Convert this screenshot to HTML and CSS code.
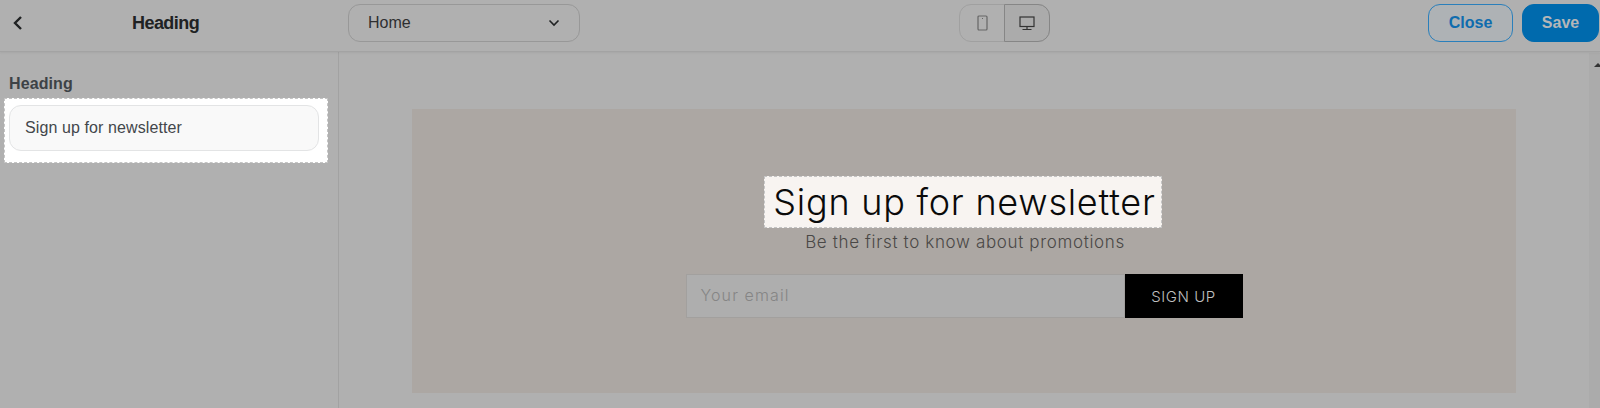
FILE: index.html
```html
<!DOCTYPE html>
<html lang="en">
<head>
<meta charset="utf-8">
<title>Heading editor</title>
<link rel="stylesheet" href="styles.css">
</head>
<body>
<header class="topbar">
  <div class="title-area">
    <button class="back" aria-label="Back">
      <svg width="12" height="16" viewBox="0 0 12 16"><path d="M9 2 L3 8 L9 14" fill="none" stroke="#202223" stroke-width="2.4"/></svg>
    </button>
    <h1 class="title">Heading</h1>
  </div>
  <div class="page-select">
    <span>Home</span>
    <svg width="12" height="8" viewBox="0 0 12 8"><path d="M1.5 1.5 L6 6 L10.5 1.5" fill="none" stroke="#202223" stroke-width="1.6"/></svg>
  </div>
  <div class="devices">
    <div class="device">
      <svg width="11" height="16" viewBox="0 0 11 16"><rect x="1" y="1" width="9" height="14" rx="1" fill="none" stroke="#666" stroke-width="1.2"/><rect x="5" y="3" width="1" height="1" fill="#666"/></svg>
    </div>
    <div class="device device-active">
      <svg width="16" height="15" viewBox="0 0 16 15"><rect x="1" y="1" width="14" height="9.5" fill="none" stroke="#333" stroke-width="1.2"/><path d="M8 11 V13 M3.5 13.5 H12.5" stroke="#333" stroke-width="1.2" fill="none"/></svg>
    </div>
  </div>
  <div class="actions">
    <button class="btn btn-close">Close</button>
    <button class="btn btn-save">Save</button>
  </div>
</header>
<div class="workspace">
  <aside class="sidebar">
    <h2 class="side-label">Heading</h2>
    <div class="field-focus">
      <div class="field">Sign up for newsletter</div>
    </div>
  </aside>
  <main class="canvas">
    <section class="card">
      <div class="heading-focus">Sign up for newsletter</div>
      <p class="sub">Be the first to know about promotions</p>
      <form class="signup">
        <div class="email">Your email</div>
        <div class="submit">SIGN UP</div>
      </form>
    </section>
  </main>
  <div class="scrollbar"><span class="arrow"></span></div>
</div>
</body>
</html>
```
FILE: styles.css
```css
* { box-sizing: border-box; }
html, body { margin: 0; height: 408px; overflow: hidden; }
body {
  background: #b0b0b0;
  font-family: "Liberation Sans", Arial, sans-serif;
  color: #202223;
  display: flex;
  flex-direction: column;
}
.topbar {
  height: 52px;
  flex: none;
  display: flex;
  align-items: center;
  padding-right: 1px;
  border-bottom: 1px solid #a3a3a3;
  box-shadow: 0 1px 2px rgba(0,0,0,.06);
  position: relative;
}
.title-area { width: 348px; flex: none; display: flex; align-items: center; padding-bottom: 5px; }
.back { border: 0; background: none; padding: 0; margin-left: 12px; width: 14px; height: 16px; display: flex; }
.title { margin: 0 0 0 106px; font-size: 18px; line-height: 22px; font-weight: 700; letter-spacing: -.55px; }
.page-select {
  width: 232px;
  height: 38px;
  margin-bottom: 5px;
  border: 1px solid #989898;
  border-radius: 12px;
  display: flex;
  align-items: center;
  justify-content: space-between;
  padding: 0 19px 0 19px;
  font-size: 16px;
  color: #2e2f30;
}
.devices {
  margin-left: 379px;
  margin-bottom: 5px;
  width: 91px;
  height: 38px;
  display: flex;
  border: 1px solid #a0a0a0;
  border-radius: 12px;
}
.device { flex: 1; display: flex; align-items: center; justify-content: center; }
.device-active {
  flex: 0 0 46px;
  margin: -1px -1px -1px 0;
  background: #ababab;
  border: 1px solid #868686;
  border-radius: 0 12px 12px 0;
}
.actions { margin-left: auto; margin-bottom: 5px; display: flex; gap: 9px; }
.btn {
  height: 38px;
  border-radius: 12px;
  font: 700 16px "Liberation Sans", Arial, sans-serif;
  padding: 0;
}
.btn-close { width: 85px; border: 1px solid #2a7fbb; background: #aeb2b5; color: #0f6cae; }
.btn-save { width: 77px; border: 1px solid #006aad; background: #006aad; color: #b4b6b8; }
.workspace { flex: 1; display: flex; min-height: 0; }
.sidebar { width: 339px; flex: none; border-right: 1px solid #a2a2a2; padding-top: 22px; }
.side-label { margin: 0 0 5px 9px; font-size: 16px; line-height: 19px; font-weight: 700; color: #3d4246; letter-spacing: .1px; }
.field-focus {
  margin-left: 4px;
  width: 324px;
  height: 65px;
  background: #fff;
  outline: 1px dashed #c4c4c4;
  outline-offset: -1px;
  padding: 7px 9px 0 5px;
}
.field {
  height: 46px;
  border: 1px solid #e3e4e5;
  border-radius: 12px;
  background: #f9f9f9;
  padding-left: 15px;
  display: flex;
  align-items: center;
  font-size: 16px;
  letter-spacing: .1px;
  color: #43474b;
}
.canvas { flex: 1; min-width: 0; padding: 57px 0 0 73px; }
.card {
  width: 1104px;
  height: 284px;
  background: #aca7a3;
  display: flex;
  flex-direction: column;
  align-items: center;
  font-family: "Inter", "Liberation Sans", sans-serif;
  padding-top: 67px;
}
.heading-focus {
  width: 398px;
  height: 52px;
  margin-left: -2px;
  padding-left: 3px;
  background: #f8f4f1;
  outline: 1px dashed #c4c4c4;
  outline-offset: -1px;
  color: #0a0a0a;
  font-size: 36px;
  font-weight: 300;
  line-height: 52px;
  text-align: center;
  letter-spacing: .75px;
  white-space: nowrap;
}
.sub {
  margin: 3px 0 0 2px;
  font-size: 17px;
  font-weight: 300;
  line-height: 22px;
  letter-spacing: .65px;
  color: #4a4846;
}
.signup { display: flex; margin: 21px 0 0 0; width: 557px; height: 44px; }
.email {
  flex: 1;
  background: #aeaeae;
  border: 1px solid #a2a09e;
  padding-left: 14px;
  font-size: 16px;
  font-weight: 300;
  line-height: 40px;
  letter-spacing: 1.1px;
  color: #858585;
}
.submit {
  flex: 0 0 118px;
  background: #000;
  color: #c0c0c0;
  display: flex;
  align-items: center;
  justify-content: center;
  font-size: 15px;
  font-weight: 300;
  letter-spacing: .55px;
}
.scrollbar { width: 11px; flex: none; background: #ababab; margin-left: auto; padding: 10px 0 0 5px; margin-top: 1px; overflow: hidden; }
.arrow {
  display: block;
  width: 0;
  height: 0;
  border-left: 4px solid transparent;
  border-right: 4px solid transparent;
  border-bottom: 4px solid #333;
}
```
